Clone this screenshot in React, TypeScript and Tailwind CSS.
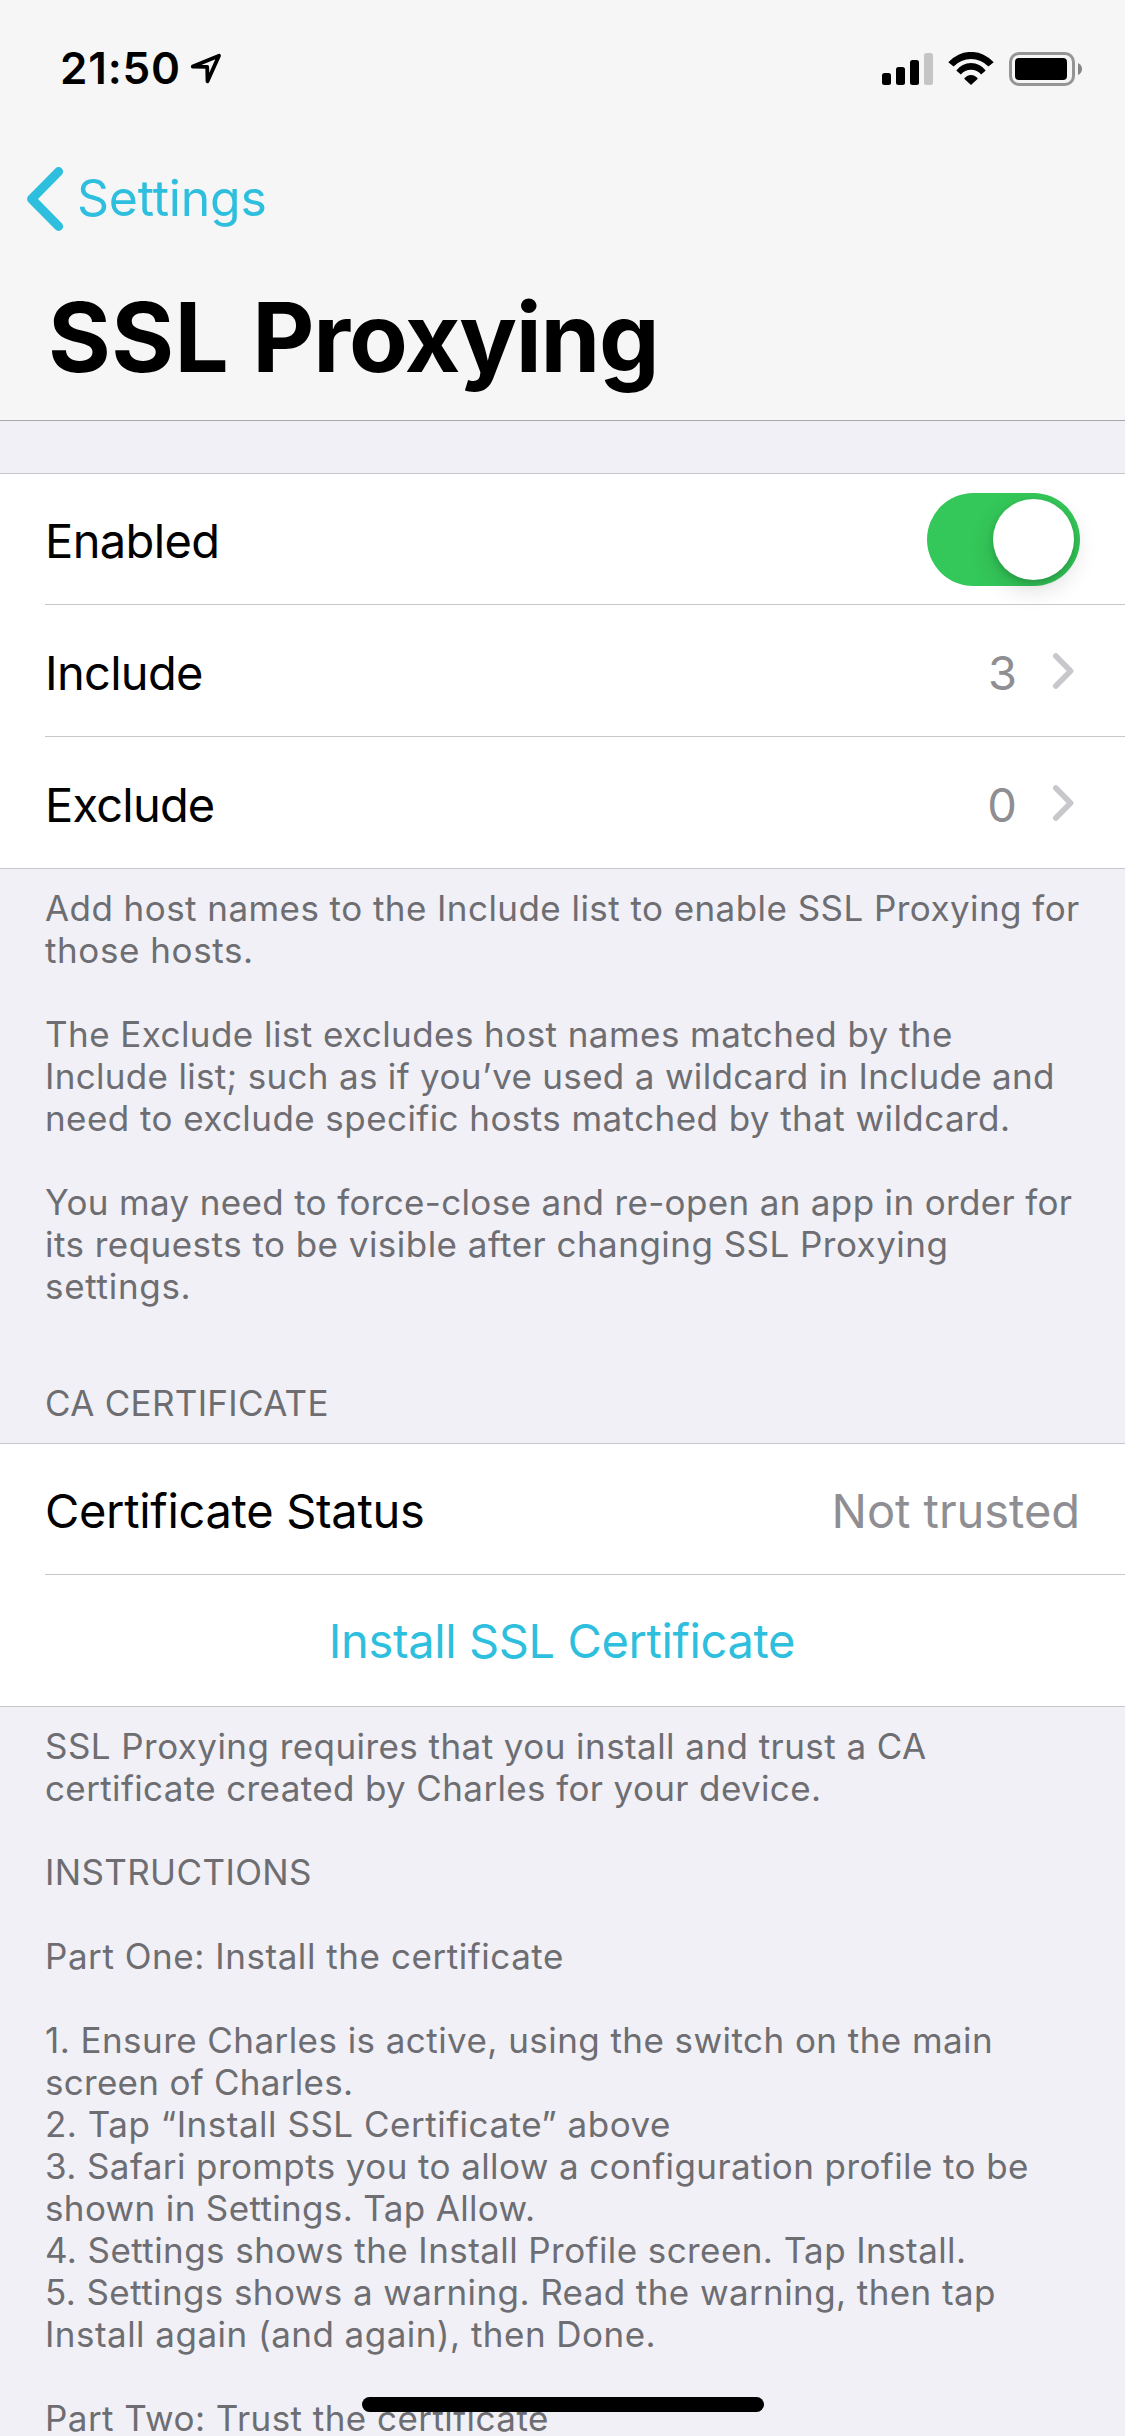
import type { ReactNode } from "react";

type Line = { text: string; tracking: string } | null;

const proxyNotes: Line[] = [
  { text: "Add host names to the Include list to enable SSL Proxying for", tracking: "tracking-[0.44px]" },
  { text: "those hosts.", tracking: "tracking-[0.581px]" },
  null,
  { text: "The Exclude list excludes host names matched by the", tracking: "tracking-[0.438px]" },
  { text: "Include list; such as if you’ve used a wildcard in Include and", tracking: "tracking-[0.317px]" },
  { text: "need to exclude specific hosts matched by that wildcard.", tracking: "tracking-[0.43px]" },
  null,
  { text: "You may need to force-close and re-open an app in order for", tracking: "tracking-[0.345px]" },
  { text: "its requests to be visible after changing SSL Proxying", tracking: "tracking-[0.465px]" },
  { text: "settings.", tracking: "tracking-[0.7px]" },
];

const certificateNotes: Line[] = [
  { text: "SSL Proxying requires that you install and trust a CA", tracking: "tracking-[0.44px]" },
  { text: "certificate created by Charles for your device.", tracking: "tracking-[0.369px]" },
  null,
  { text: "INSTRUCTIONS", tracking: "tracking-[0.355px]" },
  null,
  { text: "Part One: Install the certificate", tracking: "tracking-[0.55px]" },
  null,
  { text: "1. Ensure Charles is active, using the switch on the main", tracking: "tracking-[0.44px]" },
  { text: "screen of Charles.", tracking: "tracking-[0.283px]" },
  { text: "2. Tap “Install SSL Certificate” above", tracking: "tracking-[0.509px]" },
  { text: "3. Safari prompts you to allow a configuration profile to be", tracking: "tracking-[0.408px]" },
  { text: "shown in Settings. Tap Allow.", tracking: "tracking-[0.353px]" },
  { text: "4. Settings shows the Install Profile screen. Tap Install.", tracking: "tracking-[0.421px]" },
  { text: "5. Settings shows a warning. Read the warning, then tap", tracking: "tracking-[0.407px]" },
  { text: "Install again (and again), then Done.", tracking: "tracking-[0.465px]" },
  null,
  { text: "Part Two: Trust the certificate", tracking: "tracking-[0.447px]" },
];

function Notes({ lines }: { lines: Line[] }) {
  return (
    <div className="flex flex-col pt-[18px] pl-[45px] text-[35px] leading-[42px] text-[#6d6d72]">
      {lines.map((line, i) => (
        <div key={i} className={`h-[42px] whitespace-nowrap ${line ? line.tracking : ""}`}>
          {line?.text}
        </div>
      ))}
    </div>
  );
}

function StatusBar() {
  return (
    <div className="flex h-[132px] items-start justify-between pt-[42px] pr-[43px] pl-[60px]">
      <div className="flex items-start">
        <span className="text-[44px] leading-[53px] font-semibold tracking-[0.82px]">21:50</span>
        <svg className="mt-2.5 ml-[7px] h-[34px] w-[34px]" viewBox="0 0 34 34" fill="none">
          <path d="M4.7 14.6 31 3.7 19.5 29.3 19.2 14.9Z" stroke="black" strokeWidth="3.8" strokeLinejoin="round" />
        </svg>
      </div>
      <div className="flex items-start pt-2.5">
        <svg className="h-[34px] w-[51px]" viewBox="0 0 51 34">
          <rect x="0" y="21" width="9" height="12" rx="2.5" />
          <rect x="14" y="15" width="9" height="18" rx="2.5" />
          <rect x="28" y="8" width="9" height="25" rx="2.5" />
          <rect x="42" y="1" width="9" height="32" rx="2.5" fill="#c5c5c5" />
        </svg>
        <svg className="ml-[15px] h-[34px] w-[46px]" viewBox="0 0 46 34">
          <path d="M.3 10.3A30 30 0 0 1 45.7 10.3L40.4 14.4A24.3 24.3 0 0 0 5.6 14.4Z" />
          <path d="M8.3 18.4A18.3 18.3 0 0 1 37.7 18.4L33.2 22.6A13 13 0 0 0 12.8 22.6Z" />
          <path d="M16.2 26.7A8 8 0 0 1 29.8 26.7L23 33Z" />
        </svg>
        <svg className="ml-[15px] h-[34px] w-[73px]" viewBox="0 0 73 34">
          <rect x="1.5" y="1.5" width="63" height="31" rx="8.5" fill="none" stroke="#959595" strokeWidth="3" />
          <rect x="6" y="6" width="52" height="22" rx="4" />
          <path d="M69 11Q73 13 73 17T69 23Z" fill="#858585" />
        </svg>
      </div>
    </div>
  );
}

function Row({ label, tracking, children }: { label: string; tracking: string; children: ReactNode }) {
  return (
    <div className="flex flex-1 items-center justify-between pl-[45px] text-[47px] leading-[60px]">
      <span className={`pt-1 whitespace-nowrap text-black ${tracking}`}>{label}</span>
      {children}
    </div>
  );
}

function Divider() {
  return <div className="ml-[45px] h-px shrink-0 bg-[#c8c7cc]" />;
}

function LinkValue({ value }: { value: string }) {
  return (
    <div className="flex items-center pr-[50px]">
      <span className="pt-1 text-[#8e8e93]">{value}</span>
      <svg className="ml-[34px] h-[38px] w-6" viewBox="0 0 24 38" fill="none">
        <path d="M4.8 4 19.6 19 4.8 34" stroke="#c7c7cc" strokeWidth="5.6" strokeLinecap="round" strokeLinejoin="round" />
      </svg>
    </div>
  );
}

export default function App() {
  return (
    <div className="flex h-[2436px] w-[1125px] flex-col overflow-hidden bg-[#f0f0f6] font-['Inter',sans-serif] text-black">
      <header className="flex h-[421px] shrink-0 flex-col border-b border-[#a8a8ab] bg-[#f6f6f6]">
        <StatusBar />
        <div className="flex h-[132px] items-center pl-[25px] text-[#2ebfde]">
          <svg className="mt-px h-16 w-10" viewBox="0 0 40 64" fill="none">
            <path d="M33.6 4.6 6.6 32 33.6 59.4" stroke="currentColor" strokeWidth="9" strokeLinecap="round" strokeLinejoin="round" />
          </svg>
          <span className="ml-3 text-[50px] leading-[60px] tracking-[-0.221px]">Settings</span>
        </div>
        <h1 className="pt-[15px] pl-12 text-[96px] leading-[116px] font-bold tracking-[-1.2px]">
          <span className="tracking-[0.4px]">SSL </span>Proxying
        </h1>
      </header>

      <section className="mt-[52px] flex h-[396px] shrink-0 flex-col border-y border-[#c8c7cc] bg-white">
        <div className="flex h-[130px] shrink-0">
          <Row label="Enabled" tracking="tracking-[-0.6px]">
            <div className="mr-[45px] flex h-[93px] w-[153px] items-center justify-end rounded-full bg-[#34c759] pr-1.5">
              <div className="size-[81px] rounded-full bg-white shadow-[0_9px_24px_rgba(0,0,0,0.15),0_3px_6px_rgba(0,0,0,0.14)]" />
            </div>
          </Row>
        </div>
        <Divider />
        <Row label="Include" tracking="tracking-[-0.7px]">
          <LinkValue value="3" />
        </Row>
        <Divider />
        <Row label="Exclude" tracking="tracking-[-0.8px]">
          <LinkValue value="0" />
        </Row>
      </section>

      <Notes lines={proxyNotes} />

      <h2 className="mt-[75px] pl-[45px] text-[35px] leading-[42px] tracking-[0.291px] text-[#6d6d72]">CA CERTIFICATE</h2>

      <section className="mt-[19px] flex h-[264px] shrink-0 flex-col border-y border-[#c8c7cc] bg-white">
        <div className="flex h-[130px] shrink-0">
          <Row label="Certificate Status" tracking="tracking-[-0.31px]">
            <span className="pt-1 pr-[45px] tracking-[-0.05px] text-[#8e8e93]">Not trusted</span>
          </Row>
        </div>
        <Divider />
        <div className="flex flex-1 items-center justify-center pr-px text-[47px] leading-[60px] tracking-[-0.38px] text-[#2ebfde]">
          Install SSL Certificate
        </div>
      </section>

      <Notes lines={certificateNotes} />

      <div className="absolute top-[2397px] left-[362px] h-[15px] w-[402px] rounded-full bg-black" />
    </div>
  );
}
